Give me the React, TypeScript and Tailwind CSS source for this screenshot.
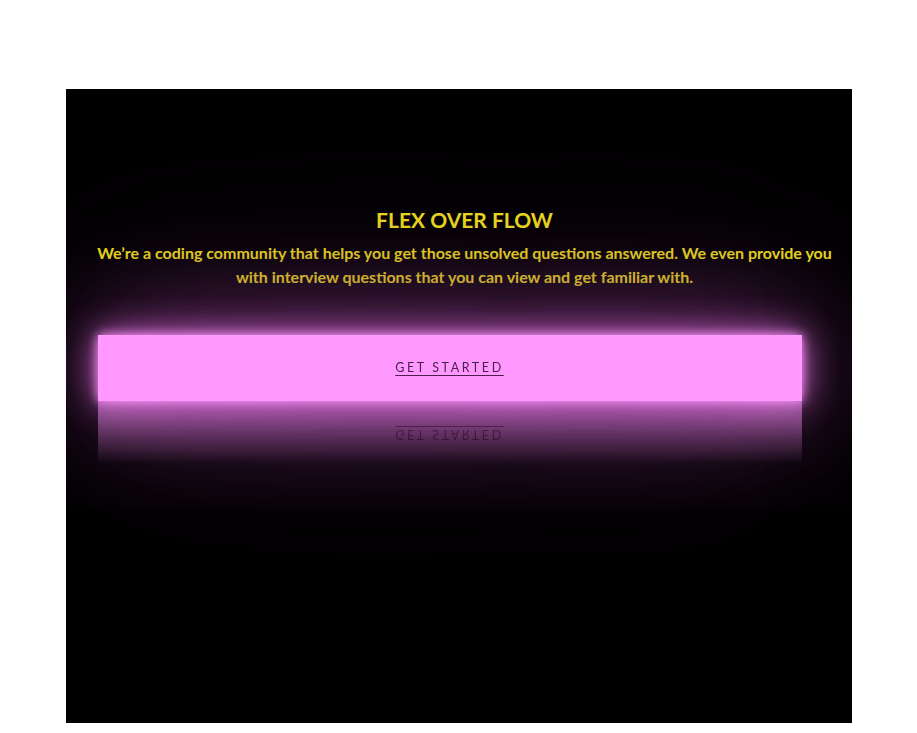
import React from 'react'

export default function App() {
  return (
    <div className="min-h-screen bg-white pt-[89px]" style={{ fontFamily: 'Lato, "Open Sans", sans-serif' }}>
      <div className="mx-auto w-[786px] h-[634px] bg-black overflow-hidden flex flex-col">
        {/* Heading */}
        <div className="pt-[117px] pl-[12px] text-center text-[#f4e31c]">
          <h1 className="text-[21px] font-bold leading-[28px]">FLEX OVER FLOW</h1>
          <p className="mt-[7px] text-[16px] font-bold leading-[24px] px-[14px]">
            We&rsquo;re a coding community that helps you get those unsolved questions answered. We even provide you with interview questions that you can view and get familiar with.
          </p>
        </div>

        {/* Glowing button */}
        <div className="mt-[46px] pl-[32px]">
          <a
            href="#"
            className="flex items-center justify-center w-[704px] h-[66px] bg-[#ff99ff] text-[#4a1d4a] text-[12.5px] tracking-[2.6px] underline underline-offset-[3px] shadow-[0_0_10px_#ff99ff,0_0_35px_#e070e0,0_0_110px_#8a3a8a,0_0_200px_#4a1f4a] [-webkit-box-reflect:below_0px_linear-gradient(transparent_5%,rgba(0,0,0,0.7))]"
          >
            GET STARTED
          </a>
        </div>
      </div>
    </div>
  )
}
